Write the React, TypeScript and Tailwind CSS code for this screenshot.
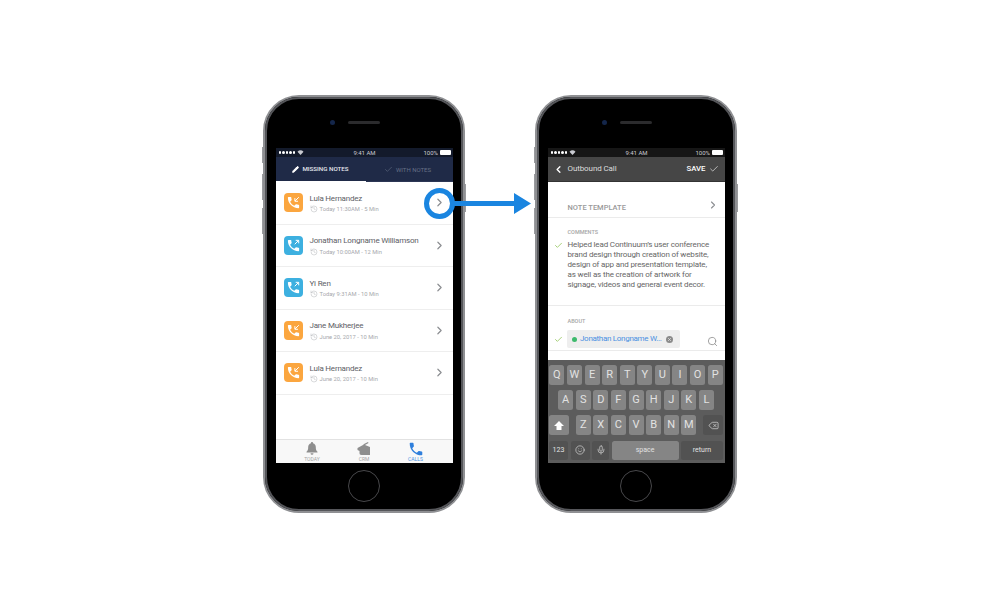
import React from 'react';
import { Check, ChevronLeft, ChevronRight, Delete, History, Mic, Pencil, Search, Smile, X } from 'lucide-react';

const calls = [
  { name: 'Lula Hernandez', meta: 'Today 11:30AM - 5 Min', out: false },
  { name: 'Jonathan Longname Williamson', meta: 'Today 10:00AM - 12 Min', out: true },
  { name: 'Yi Ren', meta: 'Today 9:31AM - 10 Min', out: true },
  { name: 'Jane Mukherjee', meta: 'June 20, 2017 - 10 Min', out: false },
  { name: 'Lula Hernandez', meta: 'June 20, 2017 - 10 Min', out: false },
];

const keyRows = ['QWERTYUIOP', 'ASDFGHJKL', 'ZXCVBNM'];

const phonePath =
  'M6.62 10.79c1.44 2.83 3.76 5.14 6.59 6.59l2.2-2.2c.27-.27.67-.36 1.02-.24 1.12.37 2.33.57 3.57.57.55 0 1 .45 1 1V20c0 .55-.45 1-1 1-9.39 0-17-7.61-17-17 0-.55.45-1 1-1h3.5c.55 0 1 .45 1 1 0 1.25.2 2.45.57 3.57.11.35.03.74-.25 1.02l-2.2 2.2z';

const Phone: React.FC<{ children: React.ReactNode }> = ({ children }) => (
  <div className="relative w-[202px] h-[418px] rounded-[36px] border-2 border-[#8f9093] bg-black">
    <div className="absolute -left-[3px] top-[50px] w-[1px] h-[16px] bg-[#9a9b9e]" />
    <div className="absolute -left-[3px] top-[77px] w-[1px] h-[26px] bg-[#9a9b9e]" />
    <div className="absolute -left-[3px] top-[111px] w-[1px] h-[26px] bg-[#9a9b9e]" />
    <div className="absolute -right-[3px] top-[87px] w-[1px] h-[28px] bg-[#9a9b9e]" />
    <div className="flex flex-col items-center h-full rounded-[34px] border-2 border-[#55565a]">
      <div className="h-[49px] w-full flex justify-center pt-[22px] shrink-0">
        <div className="relative w-[32px] h-[3px] rounded-full bg-[#2b2b2d]">
          <div className="absolute -left-[18px] -top-[1px] w-[5px] h-[5px] rounded-full bg-[#14264a]" />
        </div>
      </div>
      <div className="w-[177px] h-[315px] shrink-0 flex flex-col overflow-hidden bg-white">{children}</div>
      <div className="flex-1 flex items-center justify-center">
        <div className="w-[32px] h-[32px] rounded-full border-[1.5px] border-[#48484b]" />
      </div>
    </div>
  </div>
);

const StatusBar: React.FC<{ bg: string }> = ({ bg }) => (
  <div className={`h-[9px] shrink-0 flex items-center justify-between pl-[3px] pr-[2px] text-[6px] leading-none text-[#c9cbd1] ${bg}`}>
    <div className="flex items-center gap-[2px] w-[50px]">
      <div className="flex gap-[1px]">
        {[0, 1, 2, 3, 4].map((i) => (
          <div key={i} className="w-[2.5px] h-[2.5px] rounded-full bg-white" />
        ))}
      </div>
      <svg width="7" height="5" viewBox="0 0 12 10">
        <path d="M6 10 0 3.5a8.600 8.600 0 0 1 12 0z" fill="#c9cbd1" />
      </svg>
    </div>
    <span>9:41 AM</span>
    <div className="flex items-center justify-end gap-[1.5px] w-[50px]">
      <span>100%</span>
      <div className="w-[11px] h-[5px] rounded-[1px] bg-white" />
    </div>
  </div>
);

const CallIcon: React.FC<{ out: boolean }> = ({ out }) => (
  <svg width="15" height="15" viewBox="0 0 24 24" className="text-white">
    <path fill="currentColor" d={phonePath} />
    {out ? (
      <path d="M14 10l6-6M15.500 3.700H20.300V8.500" fill="none" stroke="currentColor" strokeWidth="1.600" />
    ) : (
      <path d="M20.500 3.500l-6 6M14.200 5v5h5" fill="none" stroke="currentColor" strokeWidth="1.600" />
    )}
  </svg>
);

const CallRow: React.FC<{ name: string; meta: string; out: boolean }> = ({ name, meta, out }) => (
  <div className="h-[42.5px] shrink-0 flex items-center pl-[8px] pr-[7px] border-b border-[#eeeeee]">
    <div className={`w-[19px] h-[19px] rounded-[4px] flex items-center justify-center ${out ? 'bg-[#3db0e0]' : 'bg-[#fba63f]'}`}>
      <CallIcon out={out} />
    </div>
    <div className="ml-[7px] flex-1 min-w-0">
      <div className="text-[8px] tracking-[-0.2px] leading-[11px] text-[#5d6066] whitespace-nowrap">{name}</div>
      <div className="flex items-center gap-[2px] mt-[1.5px] text-[5.8px] leading-[8px] text-[#a6a8ac] whitespace-nowrap">
        <History size={8} strokeWidth={1.3} />
        <span>{meta}</span>
      </div>
    </div>
    <ChevronRight size={13} strokeWidth={2.2} className="text-[#8b8d91]" />
  </div>
);

const LeftScreen: React.FC = () => (
  <>
    <StatusBar bg="bg-[#131a2b]" />
    <div className="h-[25px] shrink-0 flex bg-[#1f2a47]">
      <div className="w-[90px] h-full flex items-center justify-center gap-[3px] border-b border-white pt-[1px] text-[6.2px] font-medium text-[#e6e8ee]">
        <Pencil size={7} strokeWidth={3} className="text-white" fill="white" />
        <span>MISSING NOTES</span>
      </div>
      <div className="flex-1 h-full flex items-center justify-center gap-[3px] pt-[1px] pr-[3px] border-b border-[#2c3654] text-[6px] text-[#667086]">
        <Check size={9} strokeWidth={1.5} />
        <span>WITH NOTES</span>
      </div>
    </div>
    <div className="flex-1 flex flex-col">
      {calls.map((c, i) => (
        <CallRow key={i} {...c} />
      ))}
    </div>
    <div className="h-[24px] shrink-0 flex justify-center bg-[#f8f8f8] border-t border-[#e2e2e2] text-[5px] leading-none text-[#a5a5a5]">
      <div className="w-[52px] flex flex-col items-center pt-[2px]">
        <svg width="12" height="13" viewBox="0 0 24 26" className="text-[#8e8e8e]">
          <path fill="currentColor" d="M12 0a2 2 0 0 1 2 2.400c3.600 1 5.600 4 5.600 7.600 0 5 1 7.400 3.400 9.600v1.400H1v-1.400C3.400 17.400 4.400 15 4.400 10c0-3.600 2-6.600 5.600-7.600A2 2 0 0 1 12 0zM9 22.500h6a3 3 0 0 1-6 0z" />
        </svg>
        <span className="mt-[2px]">TODAY</span>
      </div>
      <div className="w-[52px] flex flex-col items-center pt-[2px]">
        <svg width="14" height="13" viewBox="0 0 28 26" className="text-[#8e8e8e]">
          <path fill="currentColor" d="M1 12 12 6l2-2 8-4 1 2-7 4 10 4v16H9c-3 0-4-2-4-4v-4l-4-2z" />
        </svg>
        <span className="mt-[2px]">CRM</span>
      </div>
      <div className="w-[52px] flex flex-col items-center pt-[2px] pr-[1px] text-[#4a90e2]">
        <svg width="14" height="14" viewBox="2 2 20 20" className="text-[#2f7fdc]">
          <path fill="currentColor" d={phonePath} />
        </svg>
        <span className="mt-[1px]">CALLS</span>
      </div>
    </div>
  </>
);

const Key: React.FC<{ children: React.ReactNode; className?: string }> = ({ children, className }) => (
  <div className={`h-[19.5px] rounded-[2.5px] flex items-center justify-center ${className}`}>{children}</div>
);

const Keyboard: React.FC = () => (
  <div className="h-[103px] shrink-0 flex flex-col bg-[#5c5c5c] pl-[1.5px] pr-[1.5px] pt-[5px] gap-[5.7px] text-[#e2e2e2]">
    <div className="flex justify-center gap-[2.600px]">
      {keyRows[0].split('').map((k) => (
        <Key key={k} className="w-[15px] bg-[#858585] text-[11px]">{k}</Key>
      ))}
    </div>
    <div className="flex justify-center gap-[2.600px]">
      {keyRows[1].split('').map((k) => (
        <Key key={k} className="w-[15px] bg-[#858585] text-[11px]">{k}</Key>
      ))}
    </div>
    <div className="flex justify-between">
      <Key className="w-[20px] bg-[#858585]">
        <svg width="10" height="9" viewBox="0 0 10 9">
          <path d="M5 0 10 5H7.500V9h-5V5H0z" fill="white" />
        </svg>
      </Key>
      <div className="flex gap-[2.600px]">
        {keyRows[2].split('').map((k) => (
          <Key key={k} className="w-[15px] bg-[#858585] text-[11px]">{k}</Key>
        ))}
      </div>
      <Key className="w-[20px] bg-[#525252]">
        <Delete size={11} strokeWidth={1.5} className="text-[#dcdcdc]" />
      </Key>
    </div>
    <div className="flex gap-[2.500px] text-[7px]">
      <Key className="w-[19px] bg-[#525252]">123</Key>
      <Key className="w-[19px] bg-[#525252]"><Smile size={10} strokeWidth={1.5} /></Key>
      <Key className="w-[17px] bg-[#525252]"><Mic size={10} strokeWidth={1.5} /></Key>
      <Key className="flex-1 bg-[#858585]">space</Key>
      <Key className="w-[42px] bg-[#525252]">return</Key>
    </div>
  </div>
);

const RightScreen: React.FC = () => (
  <>
    <StatusBar bg="bg-[#161616]" />
    <div className="h-[25px] shrink-0 flex items-center bg-[#464646] border-b border-[#333] pl-[5px] pr-[6px] text-white">
      <ChevronLeft size={11} strokeWidth={3} />
      <span className="ml-[4px] flex-1 text-[8px] tracking-[-0.1px] text-[#dcdcdc]">Outbound Call</span>
      <span className="text-[7.8px] font-medium">SAVE</span>
      <Check size={10} strokeWidth={1.8} className="ml-[3px] text-[#dcdcdc]" />
    </div>
    <div className="h-[36px] shrink-0 flex items-end justify-between pl-[20px] pr-[6px] pb-[5px] border-b border-[#ebebeb] text-[7.5px] font-medium text-[#9a9a9a]">
      <span className="leading-[9px]">NOTE TEMPLATE</span>
      <ChevronRight size={12} strokeWidth={2.2} className="text-[#8b8d91] mb-[1px]" />
    </div>
    <div className="h-[88px] shrink-0 flex flex-col pl-[6px] pt-[10px] border-b border-[#ebebeb]">
      <div className="pl-[14px] text-[5.5px] font-medium leading-[8px] text-[#a6a6a6]">COMMENTS</div>
      <div className="flex mt-[4px]">
        <Check size={9} strokeWidth={2} className="text-[#8cc152] mt-[1px] shrink-0" />
        <p className="ml-[5px] text-[8px] tracking-[-0.15px] leading-[10px] text-[#666666] whitespace-nowrap">
          Helped lead Continuum’s user conference<br />
          brand design through creation of website,<br />
          design of app and presentation template,<br />
          as well as the creation of artwork for<br />
          signage, videos and general event decor.
        </p>
      </div>
    </div>
    <div className="h-[45px] shrink-0 flex flex-col pl-[6px] pr-[7px] pt-[11px] border-b border-[#ebebeb]">
      <div className="pl-[14px] text-[5.5px] font-medium leading-[8px] text-[#a6a6a6]">ABOUT</div>
      <div className="flex items-center mt-[5px]">
        <Check size={9} strokeWidth={2} className="text-[#8cc152] shrink-0" />
        <div className="ml-[4px] w-[113px] h-[18px] rounded-[2px] bg-[#eeeeee] flex items-center pl-[5px] text-[8px] tracking-[-0.3px] text-[#4a90e2] whitespace-nowrap">
          <div className="w-[5px] h-[5px] rounded-full bg-[#3dba6c] mr-[3.500px]" />
          <span>Jonathan Longname W...</span>
          <div className="ml-[4px] w-[7px] h-[7px] rounded-full bg-[#8a8a8a] flex items-center justify-center">
            <X size={5} strokeWidth={3} className="text-[#eeeeee]" />
          </div>
        </div>
        <Search size={11} strokeWidth={1.8} className="ml-auto mt-[4px] text-[#8e8e8e]" />
      </div>
    </div>
    <div className="h-[9px] shrink-0 bg-white" />
    <Keyboard />
  </>
);

export default function App() {
  return (
    <div className="relative w-[1000px] h-[611px] overflow-hidden bg-white pt-[95px] font-['Roboto',sans-serif]">
      <div className="flex justify-center gap-[70px]">
        <Phone><LeftScreen /></Phone>
        <Phone><RightScreen /></Phone>
      </div>
      <div className="absolute left-[424px] top-[188px] w-[31px] h-[31px] rounded-full border-[5px] border-[#1a85e0]" />
      <svg className="absolute left-[454px] top-[192px]" width="78" height="23" viewBox="0 0 78 23">
        <path d="M0 9h60V1l17 10.500L60 22v-8H0z" fill="#1a85e0" />
      </svg>
    </div>
  );
}
